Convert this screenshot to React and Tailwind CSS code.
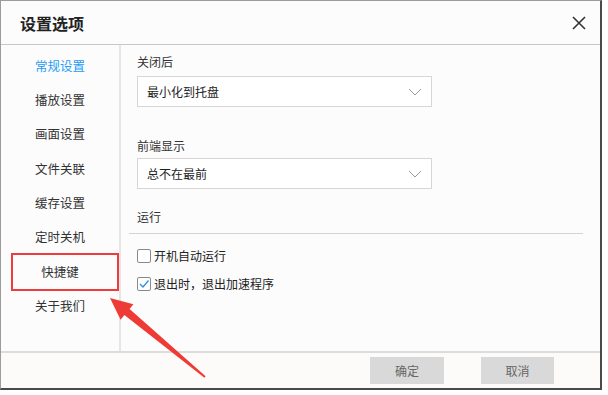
import React from "react";

const font = { fontFamily: '"Noto Sans CJK SC", "Noto Sans", sans-serif' };

function Chevron() {
  return (
    <svg width="14" height="8" viewBox="0 0 14 8" className="shrink-0">
      <path d="M1 1 L7 7 L13 1" fill="none" stroke="#9a9a9a" strokeWidth="1" />
    </svg>
  );
}

function Select({ value }) {
  return (
    <div className="w-[295px] h-[31px] border border-[#d6d6d6] bg-white flex items-center justify-between pl-[9px] pr-[9px] text-[12px] text-[#222]">
      <span>{value}</span>
      <Chevron />
    </div>
  );
}

function Checkbox({ checked, label, className }) {
  return (
    <div className={"flex items-center h-[20px] " + className}>
      <div className="w-[14px] h-[14px] border border-[#8a8a8a] rounded-[2px] bg-white flex items-center justify-center">
        {checked && (
          <svg width="12" height="12" viewBox="0 0 12 12">
            <path d="M2 6 L5 9 L10.5 2.5" fill="none" stroke="#2d8fe6" strokeWidth="1.3" />
          </svg>
        )}
      </div>
      <span className="ml-[3px] text-[12px] text-[#222]">{label}</span>
    </div>
  );
}

const items = ["常规设置", "播放设置", "画面设置", "文件关联", "缓存设置", "定时关机", "快捷键", "关于我们"];

export default function App() {
  return (
    <div className="relative w-[608px] h-[395px] bg-white" style={font}>
      <div className="w-[602px] h-[390px] flex flex-col border-l border-t border-[#9c9c9c] border-r-2 border-b-2 border-r-[#4a4a4a] border-b-[#4a4a4a] bg-[#fcfcfc]">
        <div className="h-[44px] border-b border-[#c8c8c8] flex items-center justify-between pl-[19px] pr-[14px] shrink-0">
          <span className="text-[16px] font-bold text-[#222]">设置选项</span>
          <svg width="14" height="14" viewBox="0 0 14 14">
            <path d="M1 1 L13 13 M13 1 L1 13" stroke="#333" strokeWidth="1.6" />
          </svg>
        </div>
        <div className="flex flex-1 min-h-0">
          <div className="w-[120px] border-r-2 border-[#e6e6e6] pt-[4px] flex flex-col shrink-0">
            {items.map((t, i) => (
              <div
                key={t}
                className={
                  "h-[34.3px] flex items-center justify-center text-[12.5px] " +
                  (i === 0 ? "text-[#1e9bf5]" : "text-[#333]")
                }
              >
                {t}
              </div>
            ))}
          </div>
          <div className="flex-1 flex flex-col pl-[16px]">
            <div className="mt-[7px] h-[20px] flex items-center text-[12px] text-[#333]">关闭后</div>
            <div className="mt-[4px]">
              <Select value="最小化到托盘" />
            </div>
            <div className="mt-[29px] h-[20px] flex items-center text-[12px] text-[#333]">前端显示</div>
            <div className="mt-[2px]">
              <Select value="总不在最前" />
            </div>
            <div className="mt-[18px] h-[20px] flex items-center text-[12px] text-[#333]">运行</div>
            <div className="mt-[6px] -ml-[8px] w-[454px] h-px bg-[#d4d4d4]"></div>
            <Checkbox className="mt-[12px]" label="开机自动运行" />
            <Checkbox className="mt-[8px]" checked label="退出时，退出加速程序" />
          </div>
        </div>
        <div className="h-[37px] border-t-2 border-[#dcdcdc] bg-[#fcfbf9] flex items-center justify-end pr-[46px] gap-[37px] shrink-0">
          <div className="w-[74px] h-[27px] bg-[#d9d9d9] flex items-center justify-center text-[12px] text-[#666]">确定</div>
          <div className="w-[73px] h-[27px] bg-[#d9d9d9] flex items-center justify-center text-[12px] text-[#666]">取消</div>
        </div>
      </div>
      <div className="absolute left-[11px] top-[253px] w-[108px] h-[38px] border-2 border-[#ef3b3b]"></div>
      <svg className="absolute left-0 top-0" width="608" height="395" viewBox="0 0 608 395">
        <polygon
          points="110,298 133.4,304.3 129.6,308.9 205.6,376.2 204.4,377.8 124.4,315.1 120.6,319.7"
          fill="#ef3b36"
        />
      </svg>
    </div>
  );
}
